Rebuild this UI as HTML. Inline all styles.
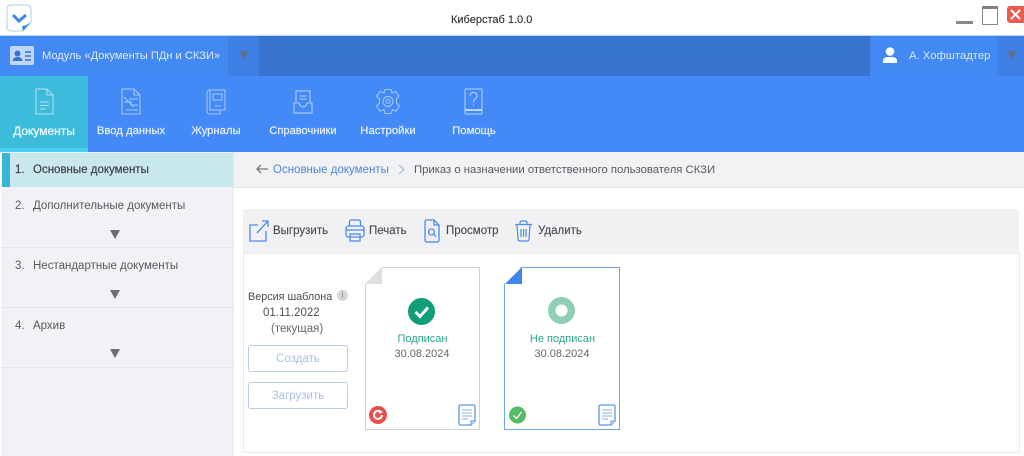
<!DOCTYPE html>
<html lang="ru"><head><meta charset="utf-8"><title>Киберстаб</title>
<style>
html,body{margin:0;padding:0;width:1024px;height:456px;overflow:hidden;background:#fff}
body{position:relative;font-family:"Liberation Sans","DejaVu Sans",sans-serif;font-size:11.5px;color:#444;filter:blur(.3px)}
.a{position:absolute}
.t{position:absolute;white-space:nowrap;line-height:14px}
svg{position:absolute;overflow:visible}
.nl{color:#e6effc;font-weight:400;-webkit-text-stroke:.2px #e6effc;transform:translateX(-50%);font-size:11.3px}
.tri{position:absolute;width:0;height:0;border-left:5px solid transparent;border-right:5px solid transparent;border-top:9px solid #6b6d72}
.btn{position:absolute;left:248px;width:98px;height:25px;border:1px solid #b9cbe8;border-radius:3px;text-align:center;line-height:27px;color:#a8bfe6}
.tb{color:#4a4d52;-webkit-text-stroke:.15px #4a4d52}
.ni{opacity:.85}
</style></head><body>

<!-- title bar -->
<div class="a" style="left:0;top:35px;width:1024px;height:1px;background:#bcd6f5"></div>
<svg style="left:6px;top:4px" width="26" height="28" viewBox="0 0 26 28">
<path d="M5 1H20Q25 1 25 6V18L17 27H5Q1 27 1 23V5Q1 1 5 1Z" fill="#fff" stroke="#b8dcea" stroke-width="1.2"/>
<path d="M7 11L13 17L20 11" fill="none" stroke="#3f86e8" stroke-width="3"/>
<path d="M25 18L17 27L16 22Q20 22 25 18Z" fill="#3f86e8"/></svg>
<div class="t" style="left:451px;top:13px;font-size:11px;color:#333;-webkit-text-stroke:.15px #333">Киберстаб 1.0.0</div>
<div class="a" style="left:956px;top:21px;width:17px;height:3px;background:#8a8a8a"></div>
<div class="a" style="left:982px;top:6px;width:14px;height:15px;border:1px solid #888;border-top:3px solid #808080;background:#fff"></div>
<div class="a" style="left:1007px;top:6px;width:17px;height:17px;background:#ea5c50;border-radius:3px 0 0 3px"></div>
<svg style="left:1007px;top:6px" width="17" height="17"><path d="M4 4L13 13M13 4L4 13" stroke="#fff" stroke-width="2"/></svg>

<!-- module bar -->
<div class="a" style="left:0;top:36px;width:1024px;height:40px;background:#3873cd"></div>
<div class="a" style="left:0;top:36px;width:228px;height:40px;background:#4289f3"></div>
<div class="a" style="left:228px;top:36px;width:31px;height:40px;background:#3f80e6"></div>
<div class="a" style="left:870px;top:36px;width:127px;height:40px;background:#4289f3"></div>
<div class="a" style="left:997px;top:36px;width:27px;height:40px;background:#3f80e6"></div>
<svg style="left:10px;top:46px" width="24" height="19" viewBox="0 0 24 19">
<rect width="24" height="19" rx="2" fill="#bfd6f8"/>
<circle cx="7.5" cy="7.5" r="3" fill="#3873cd"/><path d="M2.5 15Q3 11 7.5 11Q12 11 12.500 15Z" fill="#3873cd"/>
<path d="M15 6H21M15 10H21M15 14H21" stroke="#3873cd" stroke-width="1.6"/></svg>
<div class="t" style="left:42px;top:49px;color:#dfeafb;font-size:11.1px">Модуль «Документы ПДн и СКЗИ»</div>
<div class="tri" style="left:239px;top:51px;border-top-color:#5f7192"></div>
<svg style="left:882px;top:47px" width="16" height="16" viewBox="0 0 16 16"><circle cx="8" cy="4.500" r="4.300" fill="#fff"/><path d="M1 16V14Q1 10 6 10H10Q15 10 15 14V16Z" fill="#fff"/></svg>
<div class="t" style="left:909px;top:49px;color:#d6e4fa;font-size:11.3px">А. Хофштадтер</div>
<div class="tri" style="left:1007px;top:51px;border-top-color:#5f7192"></div>

<!-- nav -->
<div class="a" style="left:0;top:76px;width:1024px;height:76px;background:#448af6"></div>
<div class="a" style="left:0;top:76px;width:88px;height:72px;background:#3cbbdb"></div>
<div class="a" style="left:0;top:148px;width:88px;height:4px;background:#44d0f2"></div>

<svg class="ni" style="left:35px;top:88px" width="19" height="27" viewBox="0 0 19 27" fill="none" stroke="#cfe6f8" stroke-width="1">
<path d="M1 1H12L18 7V26H1ZM12 1V7H18M5 14H14M5 17.500H14M5 21H11"/></svg>
<svg class="ni" style="left:121px;top:88px" width="20" height="27" viewBox="0 0 20 27" fill="none" stroke="#b9d4fa" stroke-width="1">
<path d="M1 1H13L19 7V26H1ZM13 1V7H19M3 9L13 19M8 11H17M3 14H11M9 17H17M5 22H17"/></svg>
<svg class="ni" style="left:206px;top:88px" width="20" height="27" viewBox="0 0 20 27" fill="none" stroke="#b9d4fa" stroke-width="1">
<path d="M4 2H19V22H4ZM4 2Q1 2 1 5V23Q1 26 4 26H14V22M7 6H16V12H7ZM9 18H15"/></svg>
<svg class="ni" style="left:293px;top:90px" width="20" height="24" viewBox="0 0 20 24" fill="none" stroke="#cfe0fb" stroke-width="1">
<path d="M3 12V1H17V12M6.500 6H13.500M6.500 9H13.500"/><path d="M1 13H6Q7 17 10 17Q13 17 14 13H19V23H1Z"/></svg>
<svg class="ni" style="left:375px;top:88px" width="26" height="27" viewBox="0 0 26 27" fill="none" stroke="#b9d4fa" stroke-width="1">
<path d="M10 1.500H16L17 5L20.500 3.500L24 8L21.500 11L21.500 15L24.500 18L21 23L17.500 21.500L16 25.500H10L9 21.500L5 23L1.500 18L4.500 15V11L1.500 8L5 3.500L9 5Z"/>
<circle cx="13" cy="13.500" r="5"/><circle cx="13" cy="13.500" r="2"/></svg>
<svg class="ni" style="left:464px;top:88px" width="19" height="27" viewBox="0 0 19 27" fill="none" stroke="#cfe0fb" stroke-width="1">
<rect x="1" y="1" width="17" height="25" rx="1"/><path d="M1 22H18" stroke-width="2"/>
<path d="M6 8Q6.500 4.500 9.500 4.500Q13 4.500 13 8Q13 10 11 11Q9.500 12 9.500 14.500M9.500 16.500V18"/></svg>

<div class="t nl" style="left:44px;top:124px;color:#eefafd;-webkit-text-stroke:.25px #eefafd;font-size:12px">Документы</div>
<div class="t nl" style="left:131px;top:124px">Ввод данных</div>
<div class="t nl" style="left:216px;top:124px">Журналы</div>
<div class="t nl" style="left:303px;top:124px;font-size:11.1px">Справочники</div>
<div class="t nl" style="left:388px;top:124px">Настройки</div>
<div class="t nl" style="left:474px;top:124px">Помощь</div>

<!-- sidebar -->
<div class="a" style="left:1px;top:152px;width:232px;height:304px;background:#f2f2f6"></div>
<div class="a" style="left:233px;top:152px;width:1px;height:304px;background:#e8e8ec"></div>
<div class="a" style="left:2px;top:153px;width:231px;height:34px;background:#c8e8ee"></div>
<div class="a" style="left:2px;top:153px;width:8px;height:34px;background:#38b6d8"></div>
<div class="a" style="left:2px;top:247px;width:231px;height:1px;background:#e4e4e8"></div>
<div class="a" style="left:2px;top:307px;width:231px;height:1px;background:#e4e4e8"></div>
<div class="a" style="left:2px;top:367px;width:231px;height:1px;background:#e4e4e8"></div>
<div class="t" style="left:15px;top:163px;color:#3d4046;-webkit-text-stroke:.2px #3d4046">1.</div>
<div class="t" style="left:33px;top:163px;color:#3d4046;-webkit-text-stroke:.2px #3d4046">Основные документы</div>
<div class="t" style="left:15px;top:199px;color:#55585d">2.</div>
<div class="t" style="left:33px;top:199px;color:#55585d">Дополнительные документы</div>
<div class="tri" style="left:110px;top:230px"></div>
<div class="t" style="left:15px;top:259px;color:#55585d">3.</div>
<div class="t" style="left:33px;top:259px;color:#55585d">Нестандартные документы</div>
<div class="tri" style="left:110px;top:290px"></div>
<div class="t" style="left:15px;top:319px;color:#55585d">4.</div>
<div class="t" style="left:33px;top:319px;color:#55585d">Архив</div>
<div class="tri" style="left:110px;top:349px"></div>

<!-- breadcrumb -->
<div class="a" style="left:234px;top:152px;width:790px;height:35px;background:#f2f2f5;border-bottom:1px solid #e6e6ea"></div>
<svg style="left:256px;top:164px" width="12" height="10" viewBox="0 0 12 10" fill="none" stroke="#777" stroke-width="1.300"><path d="M5 1L1 5L5 9M1 5H12"/></svg>
<div class="t" style="left:273px;top:163px;color:#4a86d8">Основные документы</div>
<svg style="left:398px;top:164px" width="7" height="11" viewBox="0 0 7 11" fill="none" stroke="#8fb0e0" stroke-width="1"><path d="M1 1L6 5.500L1 10"/></svg>
<div class="t" style="left:414px;top:163px;color:#55585d;font-size:11.3px">Приказ о назначении ответственного пользователя СКЗИ</div>

<!-- toolbar -->
<div class="a" style="left:243px;top:209px;width:776px;height:44px;background:#f1f1f4"></div>
<div class="a" style="left:243px;top:253px;width:775px;height:198px;background:#fff;border:1px solid #ececf0"></div>

<svg style="left:249px;top:220px" width="20" height="22" viewBox="0 0 20 22" fill="none" stroke="#4a8ce8" stroke-width="1.300">
<path d="M9 5H1V21H17V11M8 13L19 1M13 1H19V7"/></svg>
<div class="t tb" style="left:273px;top:224px">Выгрузить</div>
<svg style="left:345px;top:219px" width="20" height="23" viewBox="0 0 20 23" fill="none" stroke="#4a8ce8" stroke-width="1.300">
<path d="M4.500 7V3Q4.500 1 6.500 1H13.500Q15.500 1 15.500 3V7"/><rect x="1" y="7" width="18" height="11" rx="2.500"/><path d="M1 11H19"/><rect x="5" y="15" width="10" height="7"/></svg>
<div class="t tb" style="left:369px;top:224px">Печать</div>
<svg style="left:424px;top:219px" width="16" height="24" viewBox="0 0 16 24" fill="none" stroke="#4a8ce8" stroke-width="1.300">
<path d="M2.500 1H10L15 6V21Q15 23 13 23H3Q1 23 1 21V3Q1 1 2.500 1ZM10 1V6H15"/><circle cx="7.500" cy="13" r="3"/><path d="M10 15.500L12 18"/></svg>
<div class="t tb" style="left:446px;top:224px">Просмотр</div>
<svg style="left:514px;top:220px" width="19" height="22" viewBox="0 0 19 22" fill="none" stroke="#4a8ce8" stroke-width="1.200">
<path d="M1 4.500H18M6 4V2.500Q6 1 7.500 1H11.500Q13 1 13 2.500V4M3 5L4 19Q4 21 6 21H13Q15 21 15 19L16 5M7 9V17M9.500 9V17M12 9V17"/></svg>
<div class="t tb" style="left:538px;top:224px">Удалить</div>

<!-- version -->
<div class="t" style="left:248px;top:290px;color:#4a4d52;font-size:10.8px">Версия шаблона</div>
<div class="a" style="left:337px;top:290px;width:11px;height:11px;border-radius:50%;background:#d6d6d8;color:#888;font-size:9px;line-height:11px;text-align:center">i</div>
<div class="t" style="left:263px;top:306px;color:#4a4d52">01.11.2022</div>
<div class="t" style="left:271px;top:322px;color:#666">(текущая)</div>
<div class="btn" style="top:345px">Создать</div>
<div class="btn" style="top:382px">Загрузить</div>

<!-- card 1 -->
<div class="a" style="left:365px;top:267px;width:113px;height:161px;background:#fff;border:1px solid #d0d0d2;clip-path:polygon(17px 0,100% 0,100% 100%,0 100%,0 17px)"></div>
<svg style="left:364px;top:266px" width="19" height="19"><path d="M18 1V18H1Z" fill="#dfdfe1"/></svg>
<svg style="left:408px;top:298px" width="27" height="27"><circle cx="13.500" cy="13.500" r="13.500" fill="#0f9e78"/><path d="M7.500 14L12 18.500L20 9.500" fill="none" stroke="#fff" stroke-width="3"/></svg>
<div class="t" style="left:422.500px;top:332px;transform:translateX(-50%);color:#2ba587;font-size:11px">Подписан</div>
<div class="t" style="left:422px;top:347px;transform:translateX(-50%);color:#666;font-size:11px">30.08.2024</div>
<svg style="left:369px;top:406px" width="18" height="18"><circle cx="9" cy="9" r="9" fill="#e8504c"/><path d="M13 9A4 4 0 1 1 11.500 5.800" fill="none" stroke="#fff" stroke-width="2"/><path d="M10 3.500L14 6L10 8Z" fill="#fff"/></svg>
<svg style="left:458px;top:404px" width="18" height="22" viewBox="0 0 18 22" fill="none" stroke="#5a96ee" stroke-width="1.300">
<path d="M2.500 1H15.500Q17 1 17 2.500V17L13 21H2.500Q1 21 1 19.500V2.500Q1 1 2.500 1Z"/><path d="M4 6H14M4 9H14M4 12H14M4 15H10" stroke="#8ab0ea" stroke-width="1"/><path d="M13 21V17H17" fill="#cfe0f8" stroke-width="1"/></svg>

<!-- card 2 -->
<div class="a" style="left:504px;top:267px;width:114px;height:161px;background:#fff;border:1px solid #6fa3ec;clip-path:polygon(17px 0,100% 0,100% 100%,0 100%,0 17px)"></div>
<svg style="left:505px;top:267px" width="18" height="18"><path d="M17 0V17H0Z" fill="#3f86f0"/></svg>
<svg style="left:548px;top:297px" width="27" height="27"><circle cx="13.500" cy="13.500" r="9.750" fill="#fff" stroke="#8fd0b4" stroke-width="7.500"/></svg>
<div class="t" style="left:562.500px;top:332px;transform:translateX(-50%);color:#2ba587;font-size:11px">Не подписан</div>
<div class="t" style="left:562px;top:347px;transform:translateX(-50%);color:#666;font-size:11px">30.08.2024</div>
<svg style="left:509px;top:406px" width="17" height="18"><circle cx="8.500" cy="9" r="8.500" fill="#55bb66"/><path d="M4.500 9.500L7.500 12.500L12.500 6" fill="none" stroke="#fff" stroke-width="1.300"/></svg>
<svg style="left:598px;top:404px" width="18" height="22" viewBox="0 0 18 22" fill="none" stroke="#5a96ee" stroke-width="1.300">
<path d="M2.500 1H15.500Q17 1 17 2.500V17L13 21H2.500Q1 21 1 19.500V2.500Q1 1 2.500 1Z"/><path d="M4 6H14M4 9H14M4 12H14M4 15H10" stroke="#8ab0ea" stroke-width="1"/><path d="M13 21V17H17" fill="#cfe0f8" stroke-width="1"/></svg>

</body></html>
